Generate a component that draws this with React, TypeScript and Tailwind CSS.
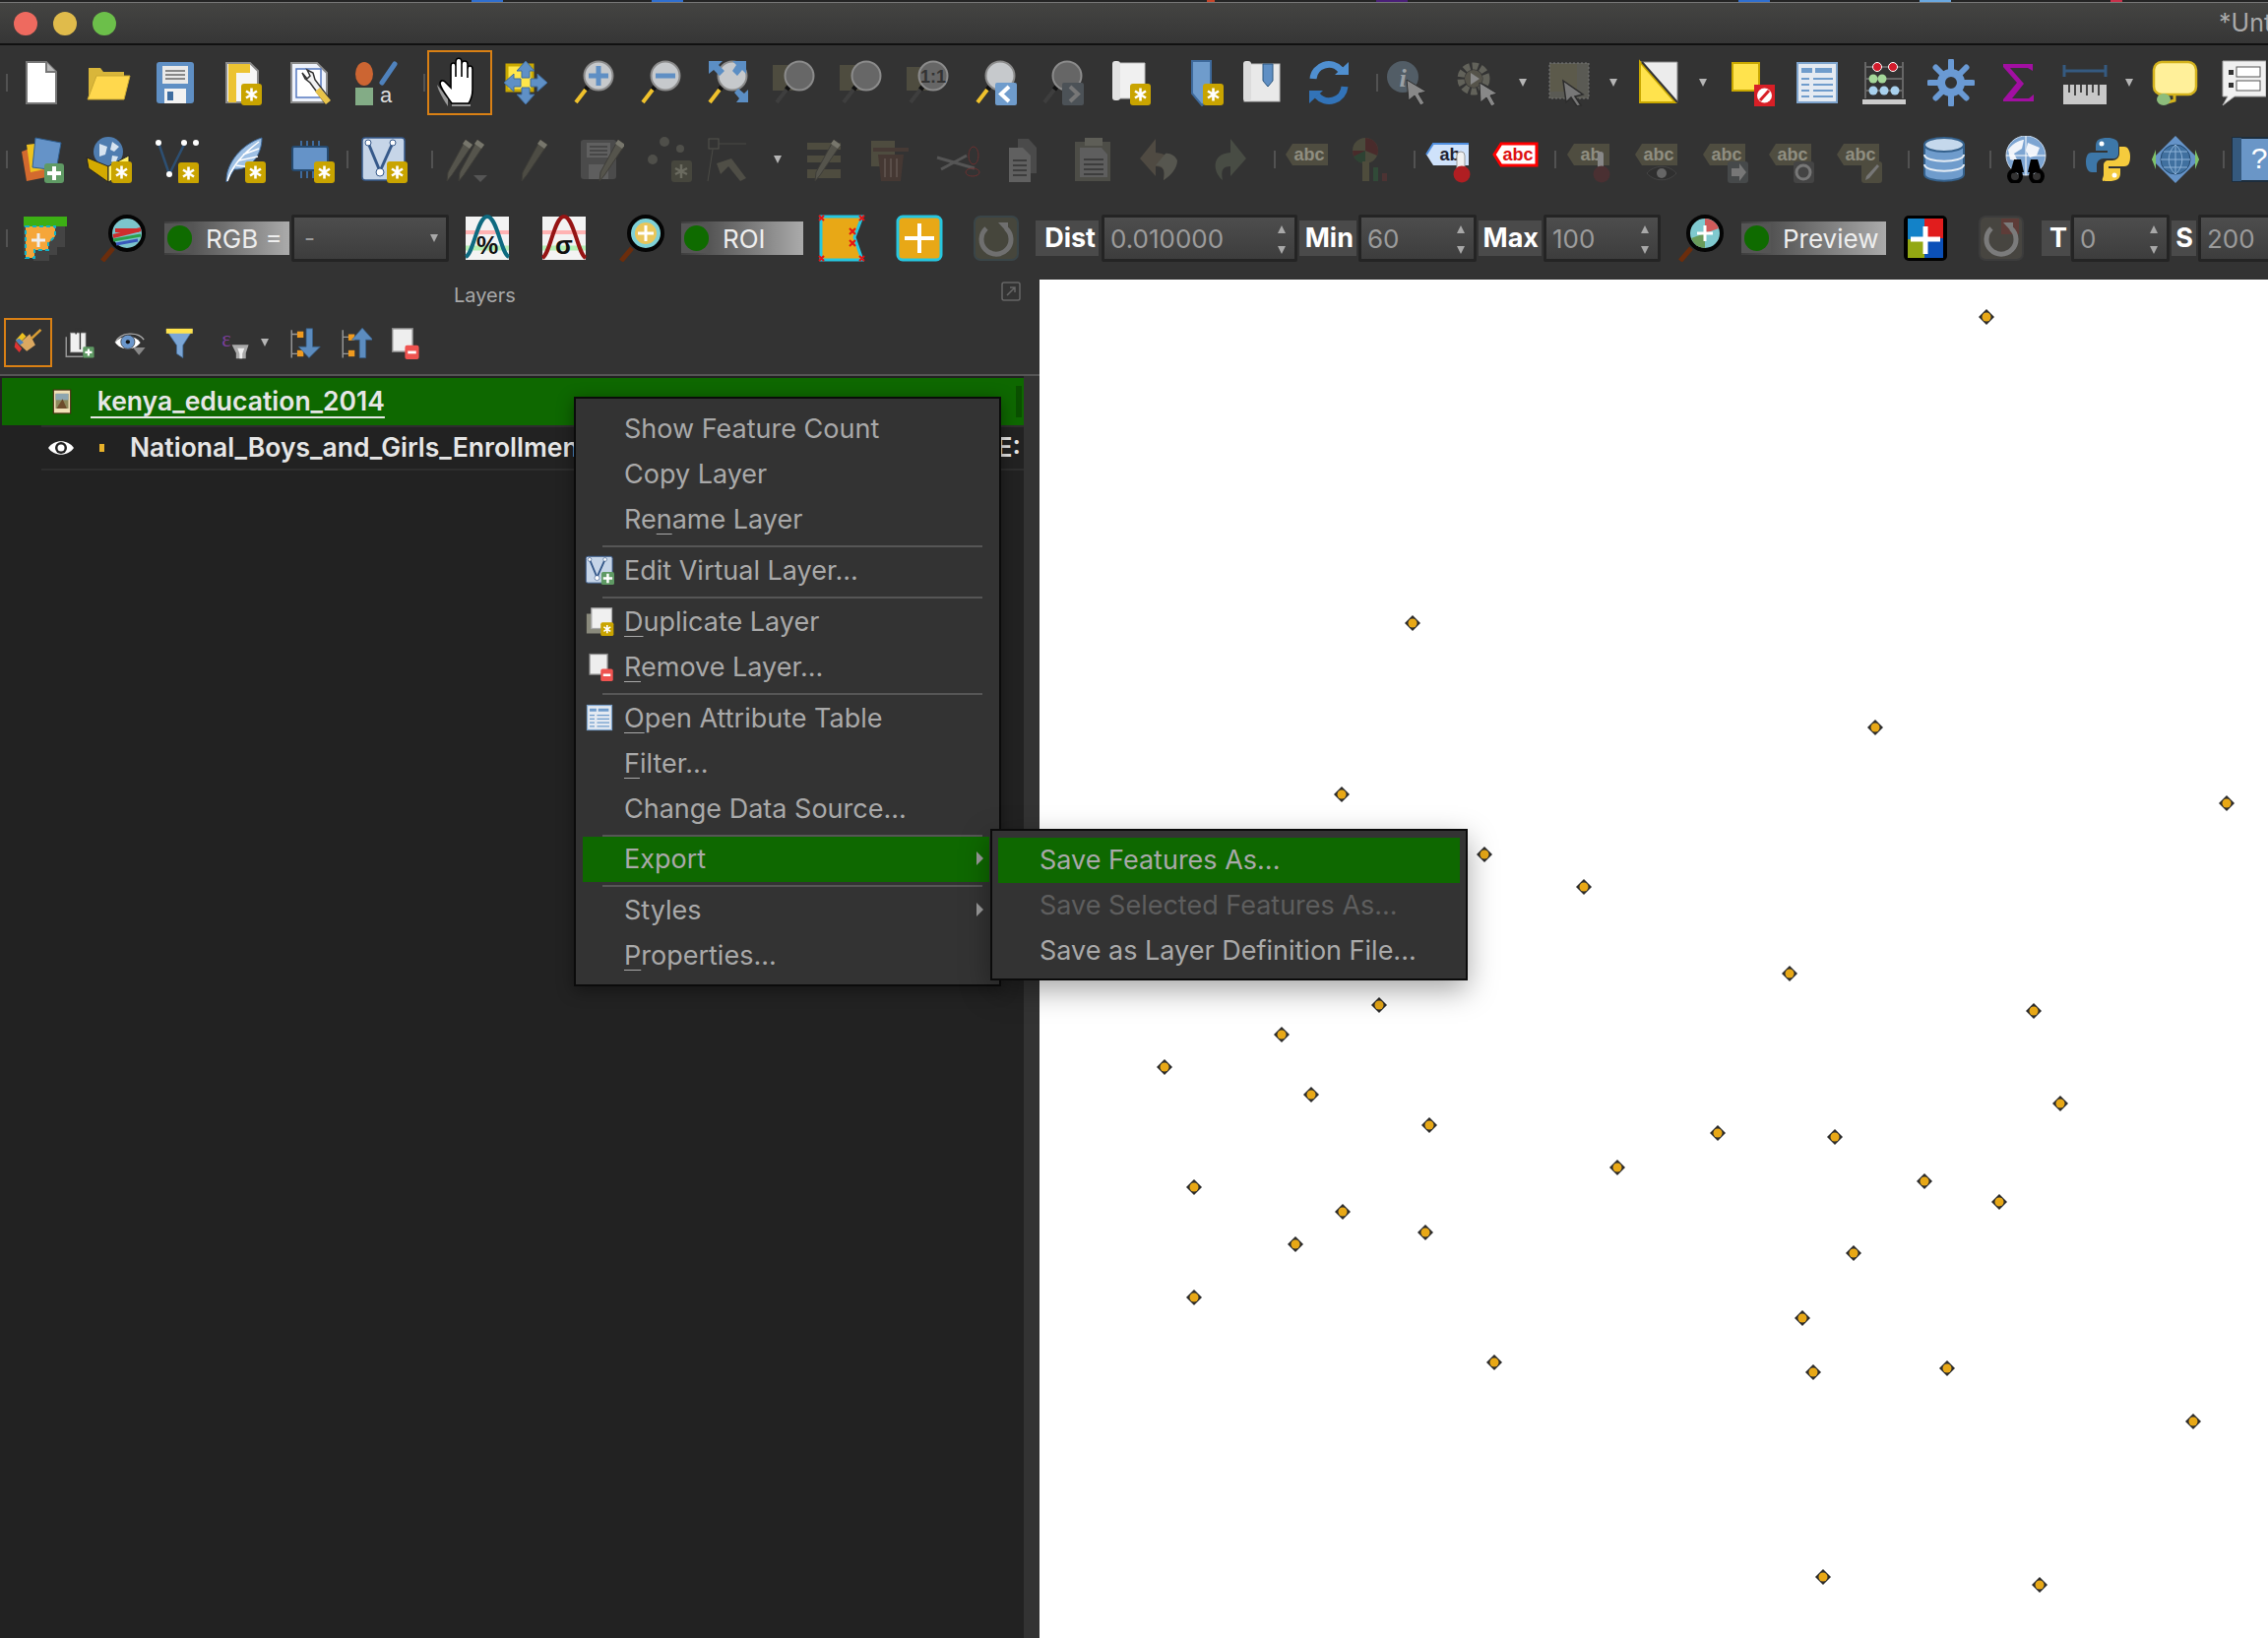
import type { ReactNode } from "react";

const Star = ({ x = 26, y = 25 }: { x?: number; y?: number }) => (
  <g>
    <rect x={x} y={y} width="21" height="22" rx="3" fill="#c9a400" />
    <path
      d={`M${x + 10.5} ${y + 4.5}v13M${x + 5} ${y + 7.5}l11 7M${x + 16} ${y + 7.5}l-11 7`}
      stroke="#fff"
      strokeWidth="2.6"
    />
  </g>
);

const Lens = ({ g = "#c6c9cc", h = "#f0c22c", children }: { g?: string; h?: string; children?: ReactNode }) => (
  <g>
    <path d="M7 44 17 31" stroke={h} strokeWidth="4" />
    <path d="M17 31l4-5" stroke="#111" strokeWidth="5" />
    <circle cx="30" cy="17" r="14.5" fill={g} stroke="#8b8b8b" strokeWidth="2" />
    {children}
  </g>
);

const DarkLens = ({ g, children }: { g: string; children?: ReactNode }) => (
  <g>
    <path d="M3 47 14 34" stroke="#6b2d0c" strokeWidth="5" />
    <circle cx="28" cy="19" r="17" fill={g} stroke="#050505" strokeWidth="4" />
    {children}
  </g>
);

const Tag = ({ fill = "#4f4d40", text = "#8f8e80", label = "abc" }: { fill?: string; text?: string; label?: string }) => (
  <g>
    <path d="M9 8h36v22H9L2 19Z" fill={fill} />
    <text x="26" y="25" textAnchor="middle" fontSize="18" fontWeight="700" fill={text} fontFamily="Liberation Sans, sans-serif">
      {label}
    </text>
  </g>
);

const Pencil = ({ x = 0, c = "#55544c" }: { x?: number; c?: string }) => (
  <g transform={`translate(${x} 0)`}>
    <path d="M28 4l7 5L14 40l-5 6 1-9Z" fill={c} stroke="#3e3d38" strokeWidth="1" />
    <path d="M28 4l7 5-3 4-7-5Z" fill="#77766c" />
  </g>
);

const Page = ({ f = "#fff" }: { f?: string }) => <path d="M9 3h20l10 10v32H9Z" fill={f} stroke="#777" strokeWidth="2" />;

const icons: Record<string, ReactNode> = {
  new: (
    <g>
      <Page />
      <path d="M29 3v10h10" fill="#bbb" stroke="#777" strokeWidth="2" />
    </g>
  ),
  open: (
    <g>
      <path d="M4 40V9h12l3 4h21v6H12L4 40Z" fill="#d9b63a" />
      <path d="M12 17h34l-6 24H3Z" fill="#ffd84d" stroke="#c9a832" />
    </g>
  ),
  save: (
    <g>
      <rect x="5" y="3" width="38" height="42" rx="3" fill="#5f8fc4" />
      <rect x="11" y="7" width="26" height="18" fill="#e9e9e9" />
      <path d="M14 12h20M14 16h20M14 20h20" stroke="#888" strokeWidth="2" />
      <rect x="13" y="30" width="22" height="15" fill="#f2f2f2" />
      <rect x="16" y="33" width="6" height="9" fill="#3e6da0" />
    </g>
  ),
  props: (
    <g>
      <path d="M8 4h24l8 8v32H8Z" fill="#f6f6f6" stroke="#8a8a8a" strokeWidth="2" />
      <path d="M10 5h22v9H18v30h-8Z" fill="#ecc332" />
      <Star x={23} y={25} />
    </g>
  ),
  wrench: (
    <g>
      <path d="M6 4h26l10 10v30H6Z" fill="#eef2fb" stroke="#8a8a8a" strokeWidth="2" />
      <rect x="11" y="10" width="25" height="29" fill="#fff" stroke="#5679c0" strokeWidth="1.5" />
      <path d="M17 14l3 6 5 4 16 22 5-4-16-21-2-7-6-3 3 6-3 3Z" fill="#f2f2f2" stroke="#333" strokeWidth="1.5" />
      <path d="M30 33l11 13 5-4-11-13Z" fill="#e8c34a" />
    </g>
  ),
  style: (
    <g>
      <ellipse cx="12" cy="15" rx="9" ry="12" fill="#cc6532" />
      <path d="M30 24 43 5" stroke="#4f82bd" strokeWidth="5" strokeLinecap="round" />
      <rect x="3" y="29" width="18" height="18" fill="#83ac86" />
      <text x="34" y="44" textAnchor="middle" fontSize="22" fill="#ddd" fontFamily="Liberation Sans, sans-serif">
        a
      </text>
    </g>
  ),
  pan: (
    <g>
      <rect x="5" y="6" width="26" height="26" fill="#ffe64a" stroke="#c9a800" strokeWidth="3" />
      <path
        d="M24 2l9 10h-5v7h-8v-7h-5ZM24 46l9-10h-5v-7h-8v7h-5ZM2 24l10-9v5h7v8h-7v5ZM46 24l-10-9v5h-7v8h7v5Z"
        fill="#5f90c6"
        stroke="#3e6a9c"
        strokeWidth="1"
      />
    </g>
  ),
  zin: (
    <Lens>
      <path d="M30 7v20M20 17h20" stroke="#5f8fc4" strokeWidth="5" />
    </Lens>
  ),
  zout: (
    <Lens>
      <path d="M20 17h20" stroke="#5f8fc4" strokeWidth="5" />
    </Lens>
  ),
  zfull: (
    <g>
      <Lens />
      <path d="M6 2h14l-4 4 6 6-5 5-6-6-5 4ZM44 2H30l4 4-4 6 5 5 5-6 4 4ZM46 44H34l3-4-5-6 4-4 6 5 4-4Z" fill="#5b8ec4" />
    </g>
  ),
  dz1: (
    <g>
      <rect x="3" y="6" width="26" height="26" fill="#4e4c3f" />
      <Lens g="#676767" h="#3e3e3e" />
    </g>
  ),
  dz11: (
    <g>
      <rect x="3" y="8" width="22" height="24" fill="#4e4c3f" />
      <Lens g="#666" h="#3e3e3e">
        <text x="30" y="24" textAnchor="middle" fontSize="18" fontWeight="700" fill="#333" fontFamily="Liberation Sans, sans-serif">
          1:1
        </text>
      </Lens>
    </g>
  ),
  zback: (
    <g>
      <Lens />
      <rect x="25" y="24" width="22" height="23" rx="2" fill="#6f9ccc" />
      <path d="M39 28l-8 7.5 8 7.5" fill="none" stroke="#fff" strokeWidth="4" />
    </g>
  ),
  zfwd: (
    <g>
      <Lens g="#666" h="#3e3e3e" />
      <rect x="25" y="24" width="22" height="23" rx="2" fill="#4c5257" />
      <path d="M33 28l8 7.5-8 7.5" fill="none" stroke="#777" strokeWidth="4" />
    </g>
  ),
  mapnew: (
    <g>
      <path d="M13 4h26v36H8V9a5 5 0 0 1 5-5Z" fill="#f0f0f0" stroke="#bbb" />
      <rect x="6" y="2" width="8" height="40" rx="3" fill="#e2e2e2" />
      <Star x={24} y={25} />
    </g>
  ),
  mark: (
    <g>
      <path d="M14 2h19v36l-9 9-10-12Z" fill="#6f9ccc" stroke="#3e6a9c" strokeWidth="2" />
      <Star x={25} y={25} />
    </g>
  ),
  marks: (
    <g>
      <rect x="6" y="5" width="36" height="38" fill="#e9e9e9" stroke="#bbb" />
      <rect x="5" y="2" width="8" height="41" rx="3" fill="#dcdcdc" />
      <path d="M25 5h10v17l-5 6-5-6Z" fill="#5f8fc4" stroke="#2d577f" />
    </g>
  ),
  refresh: (
    <g fill="none">
      <path d="M8 20a16 16 0 0 1 28-9" stroke="#4f8fd0" strokeWidth="7" />
      <path d="M30 16h14V3Z" fill="#4f8fd0" />
      <path d="M40 28a16 16 0 0 1-28 9" stroke="#3273b8" strokeWidth="7" />
      <path d="M18 32H4v13Z" fill="#3273b8" />
    </g>
  ),
  identify: (
    <g>
      <circle cx="20" cy="18" r="16" fill="#525d66" />
      <text x="20" y="28" textAnchor="middle" fontSize="26" fontStyle="italic" fontWeight="700" fill="#9aa0a5" fontFamily="Liberation Serif, serif">
        i
      </text>
      <path d="M24 21l20 12-8 2 6 10-4 2-6-10-6 5Z" fill="#888" stroke="#2c2c2c" />
    </g>
  ),
  action: (
    <g>
      <circle cx="20" cy="20" r="13" fill="none" stroke="#62625a" strokeWidth="7" strokeDasharray="6 2.5" />
      <circle cx="20" cy="20" r="9" fill="#55534a" />
      <path d="M17 14l9 6-9 6Z" fill="#888" />
      <path d="M26 24l18 11-7 2 5 9-4 2-5-9-6 5Z" fill="#888" stroke="#2c2c2c" />
    </g>
  ),
  select: (
    <g>
      <rect x="3" y="4" width="40" height="36" fill="#5a5a54" stroke="#777" strokeDasharray="2 2" />
      <rect x="4" y="5" width="27" height="28" fill="#5c5a4b" />
      <path d="M17 22l20 14-8 2 6 9-4 1-6-9-5 5Z" fill="#777" stroke="#2c2c2c" strokeWidth="1.5" />
    </g>
  ),
  invert: (
    <g>
      <path d="M5 3h38v41H5Z" fill="#ececec" stroke="#888" />
      <path d="M5 3v41h36Z" fill="#ffe34d" stroke="#c9a800" strokeWidth="2" />
      <path d="M7 3l36 41" stroke="#333" strokeWidth="2" />
    </g>
  ),
  desel: (
    <g>
      <rect x="5" y="4" width="27" height="28" fill="#ffe34d" stroke="#c9a800" strokeWidth="2" />
      <rect x="27" y="26" width="21" height="22" fill="#d81f26" />
      <circle cx="37.5" cy="37" r="7.5" fill="#fff" />
      <path d="M33 42l9-10" stroke="#d81f26" strokeWidth="3" />
    </g>
  ),
  table: (
    <g>
      <rect x="4" y="4" width="40" height="40" fill="#e4eaf2" stroke="#7ea4cd" strokeWidth="2" />
      <path d="M8 9h11v5H8ZM22 9h17v5H22Z" fill="#6f9ccc" />
      <path d="M8 20h8M20 20h20M8 26h8M20 26h20M8 32h8M20 32h20M8 38h8M20 38h20" stroke="#6f9ccc" strokeWidth="2" />
    </g>
  ),
  abacus: (
    <g>
      <path d="M5 40V3M43 40V3M5 8h38M5 20h38M5 32h38" stroke="#666" strokeWidth="2" />
      <rect x="2" y="41" width="44" height="5" fill="#ccc" />
      <circle cx="17" cy="8" r="4.5" fill="#d41c2c" stroke="#fff" />
      <circle cx="33" cy="8" r="4.5" fill="#d41c2c" stroke="#fff" />
      <circle cx="13" cy="20" r="4.5" fill="#a5d89a" />
      <circle cx="22" cy="20" r="4.5" fill="#a5d89a" />
      <circle cx="13" cy="32" r="4.5" fill="#a9d2ee" />
      <circle cx="24" cy="32" r="4.5" fill="#a9d2ee" />
      <circle cx="35" cy="32" r="4.5" fill="#a9d2ee" />
    </g>
  ),
  gear: (
    <g>
      <circle cx="24" cy="24" r="10" fill="none" stroke="#6a9ad4" strokeWidth="8" />
      <path
        d="M24 2v9M24 37v9M2 24h9M37 24h9M8.500 8.500l6 6M33.500 33.500l6 6M39.500 8.500l-6 6M14.500 33.500l-6 6"
        stroke="#6a9ad4"
        strokeWidth="6"
        strokeLinecap="round"
      />
    </g>
  ),
  sigma: <path d="M39 12V5H9v3l14 16L9 41v2h31v-7L35 40H18l12-15L16 9h18Z" fill="#a20fa2" />,
  ruler: (
    <g>
      <path d="M3 6v12M45 6v12M3 12h42" stroke="#355a80" strokeWidth="3" />
      <rect x="2" y="26" width="44" height="20" fill="#c8c8c8" />
      <path d="M8 26v8M14 26v11M20 26v8M26 26v11M32 26v8M38 26v11" stroke="#444" strokeWidth="2" />
    </g>
  ),
  tip: (
    <g>
      <rect x="2" y="3" width="43" height="33" rx="8" fill="#fff09a" stroke="#d3b21d" strokeWidth="2.5" />
      <path d="M23 36v6l-7 2" fill="none" stroke="#d3b21d" strokeWidth="3" />
      <ellipse cx="12" cy="41" rx="7" ry="6" fill="#8dbd7c" />
    </g>
  ),
  notes: (
    <g>
      <path d="M4 2h44v36H16L4 47l5-9H4Z" fill="#f0f0f0" stroke="#aaa" />
      <path d="M10 11h5v5h-5ZM10 24h5v5h-5Z" fill="#333" />
      <rect x="18" y="8" width="24" height="10" fill="#fff" stroke="#555" />
      <rect x="18" y="22" width="24" height="10" fill="#fff" stroke="#555" />
    </g>
  ),
  layers: (
    <g>
      <path d="M4 16 28 7l6 34-25 5Z" fill="#d36a2e" />
      <path d="M9 9l25-3 3 26-24 5Z" fill="#eec21f" />
      <path d="M18 2l26 5-5 28-24-3Z" fill="#6593c8" stroke="#2f5e8f" />
      <rect x="27" y="28" width="20" height="20" rx="3" fill="#5f9a64" />
      <path d="M37 31v14M30 38h14" stroke="#fff" strokeWidth="4" />
    </g>
  ),
  gpkg: (
    <g>
      <circle cx="24" cy="16" r="15" fill="#4f7db0" />
      <path d="M15 8l8 3-2 8-6 2ZM28 6l7 5-5 5-4-2ZM28 20l6 1-3 7-4-2Z" fill="#d7e4f0" />
      <path d="M2 22l22 9v16L4 33Z" fill="#d4aa00" stroke="#222" />
      <path d="M24 31l21-11v16L24 47Z" fill="#ffef6a" stroke="#222" />
      <Star x={27} y={26} />
    </g>
  ),
  nvector: (
    <g>
      <path d="M7 7l11 32M34 7l-16 32" stroke="#2d4f72" strokeWidth="2.5" />
      <circle cx="7" cy="7" r="3" fill="#fff" />
      <circle cx="33" cy="7" r="3" fill="#fff" />
      <circle cx="18" cy="39" r="3" fill="#fff" />
      <circle cx="45" cy="7" r="3" fill="#fff" />
      <Star x={27} y={27} />
    </g>
  ),
  quill: (
    <g>
      <path d="M8 47C7 28 24 8 44 2c0 18-12 33-28 32Z" fill="#9ec0e4" stroke="#3e6a9c" />
      <path d="M9 46c4-14 16-28 32-40M18 30l16 2M21 25l19-4M25 19l16-6" stroke="#fff" strokeWidth="1.5" fill="none" />
      <Star x={27} y={26} />
    </g>
  ),
  raster: (
    <g>
      <path d="M14 5v9M20 5v9M26 5v9M32 5v9M14 34v9M20 34v9M26 34v9M32 34v9" stroke="#3e6a9c" strokeWidth="2" />
      <rect x="5" y="11" width="36" height="24" rx="2" fill="#6593c8" stroke="#254a70" strokeWidth="2" />
      <Star x={27} y={26} />
    </g>
  ),
  virtual: (
    <g>
      <rect x="2" y="2" width="43" height="43" rx="3" fill="#c6d5e8" stroke="#36598a" strokeWidth="1.5" />
      <path d="M8 7l12 29 13-29" fill="none" stroke="#36598a" strokeWidth="3" />
      <circle cx="8" cy="7" r="3" fill="#fff" stroke="#36598a" />
      <circle cx="33" cy="7" r="3" fill="#fff" stroke="#36598a" />
      <circle cx="20" cy="37" r="4" fill="#fff" stroke="#36598a" />
      <Star x={27} y={26} />
    </g>
  ),
  virtualAdd: (
    <g>
      <rect x="2" y="2" width="43" height="43" rx="3" fill="#c6d5e8" stroke="#36598a" strokeWidth="1.5" />
      <path d="M8 7l12 29 13-29" fill="none" stroke="#36598a" strokeWidth="3" />
      <circle cx="8" cy="7" r="3" fill="#fff" stroke="#36598a" />
      <circle cx="33" cy="7" r="3" fill="#fff" stroke="#36598a" />
      <circle cx="20" cy="37" r="4" fill="#fff" stroke="#36598a" />
      <rect x="27" y="27" width="21" height="21" rx="3" fill="#5f9a64" />
      <path d="M37.500 30v15M30 37.500h15" stroke="#fff" strokeWidth="4" />
    </g>
  ),
  dpencils: (
    <g>
      <Pencil x={-6} />
      <Pencil x={6} />
      <path d="M30 40h14l-7 7Z" fill="#555" />
    </g>
  ),
  dpencil: <Pencil x={4} c="#4d4c44" />,
  dsave: (
    <g>
      <rect x="4" y="4" width="36" height="40" rx="3" fill="#4b4b4b" />
      <rect x="10" y="7" width="24" height="15" fill="#606060" />
      <path d="M13 11h18M13 15h18M13 19h18" stroke="#474747" strokeWidth="2" />
      <rect x="12" y="29" width="20" height="15" fill="#5e5e5e" />
      <Pencil x={14} />
    </g>
  ),
  dpoints: (
    <g fill="#4f4f4a">
      <circle cx="8" cy="24" r="5" />
      <circle cx="20" cy="6" r="5" />
      <circle cx="36" cy="13" r="4" />
      <rect x="27" y="25" width="21" height="22" rx="3" fill="#46463d" />
      <path d="M37 29v14M31 33l12 6M43 33l-12 6" stroke="#6b6b60" strokeWidth="2.5" />
    </g>
  ),
  dmove: (
    <g>
      <rect x="4" y="3" width="10" height="10" fill="none" stroke="#55554e" />
      <path d="M14 8h28M8 14 3 46" stroke="#4b4b46" />
      <path d="M12 28l15-5 15 20-6 3-12-15-8 8Z" fill="#4f4e46" />
    </g>
  ),
  arrowsel: (
    <g>
      <path d="M6 20h34v7H6ZM6 7h34v7H6ZM6 34h34v9H6Z" fill="#4e4c3f" />
      <Pencil x={5} />
    </g>
  ),
  trash: (
    <g>
      <rect x="4" y="5" width="24" height="26" fill="#4e4c3f" />
      <path d="M6 14h36" stroke="#463a35" strokeWidth="4" />
      <path d="M11 19h26l-3 27H14Z" fill="#453833" />
      <path d="M18 23v19M24 23v19M30 23v19" stroke="#5a4e49" strokeWidth="2" />
    </g>
  ),
  scissors: (
    <g fill="none">
      <path d="M2 22l38 11M6 34l26-14" stroke="#555" strokeWidth="3" />
      <ellipse cx="39" cy="20" rx="5" ry="9" stroke="#6b3030" />
      <ellipse cx="38" cy="37" rx="7" ry="4" stroke="#6b3030" />
    </g>
  ),
  copy: (
    <g>
      <path d="M17 3h11l8 9v26H17Z" fill="#4a4a4a" />
      <path d="M8 12h14l8 8v27H8Z" fill="#606060" />
      <path d="M12 25h14M12 30h14M12 35h14M12 40h14" stroke="#3d3d3d" strokeWidth="2" />
    </g>
  ),
  paste: (
    <g>
      <rect x="6" y="6" width="36" height="40" fill="#4d4d47" />
      <rect x="16" y="2" width="18" height="8" fill="#5e5e57" />
      <path d="M11 12h22l6 7v23H11Z" fill="#5e5e5e" />
      <path d="M15 24h20M15 29h20M15 34h20M15 39h20" stroke="#3d3d3d" strokeWidth="2" />
    </g>
  ),
  undo: (
    <g>
      <path d="M20 3 4 23l16 18V31c8 0 10 4 8 14 10-8 12-27-8-28Z" fill="#4f4a42" />
      <path d="M20 30c8 0 10 5 8 15 7-4 14-12 14-20-2-5-8-8-12-7Z" fill="#56564f" />
    </g>
  ),
  redo: (
    <g>
      <path d="M28 3l16 20-16 18V31c-8 0-10 4-8 14-10-8-12-27 8-28Z" fill="#484c44" />
    </g>
  ),
  dtag: <Tag />,
  dchart: (
    <g opacity="0.8">
      <circle cx="16" cy="15" r="13" fill="#52503f" />
      <path d="M16 15V2A13 13 0 0 1 28 20ZM16 15 5 22a13 13 0 0 1-2-7Z" fill="#4f2a2a" />
      <path d="M4 21a13 13 0 0 0 12 7V15Z" fill="#2d4634" />
      <rect x="13" y="26" width="7" height="20" fill="#55533f" />
      <rect x="24" y="32" width="5" height="14" fill="#31503a" />
      <rect x="33" y="38" width="5" height="8" fill="#533434" />
    </g>
  ),
  pin: (
    <g>
      <Tag fill="#cfe2fb" text="#223" label="ab" />
      <path d="M2 19 9 8h36" fill="none" stroke="#4f8fe0" strokeWidth="2" />
      <rect x="33" y="16" width="8" height="22" rx="4" fill="#f0f0f0" stroke="#999" />
      <circle cx="38" cy="39" r="8.500" fill="#b01e22" />
    </g>
  ),
  showpin: (
    <g>
      <path d="M9 8h36v22H9L2 19Z" fill="#fff" stroke="#f00" strokeWidth="3" />
      <text x="26" y="25" textAnchor="middle" fontSize="18" fontWeight="700" fill="#d11" fontFamily="Liberation Sans, sans-serif">
        abc
      </text>
    </g>
  ),
  dpin: (
    <g>
      <Tag label="ab" />
      <rect x="33" y="16" width="6" height="18" rx="3" fill="#888" />
      <circle cx="37" cy="39" r="8.500" fill="#4a3032" />
    </g>
  ),
  dshow: (
    <g>
      <Tag />
      <path d="M14 38c8-9 22-9 30 0-8 9-22 9-30 0Z" fill="#2f2f2f" stroke="#444" />
      <circle cx="29" cy="38" r="5" fill="#666" />
    </g>
  ),
  dmovel: (
    <g>
      <Tag />
      <rect x="27" y="26" width="21" height="22" rx="3" fill="#46494a" />
      <path d="M31 33h8v-5l7 9-7 9v-5h-8Z" fill="#777" />
    </g>
  ),
  drot: (
    <g>
      <Tag />
      <rect x="27" y="26" width="21" height="22" rx="3" fill="#444" />
      <circle cx="37" cy="37" r="7" fill="none" stroke="#777" strokeWidth="3" />
    </g>
  ),
  dedit: (
    <g>
      <Tag />
      <rect x="27" y="26" width="21" height="22" rx="3" fill="#4e4c3f" />
      <path d="M43 29l2 2-10 12-4 2 1-4Z" fill="#777" />
    </g>
  ),
  db: (
    <g>
      <path d="M4 9v30c0 9 40 9 40 0V9Z" fill="#6f9ccc" stroke="#35618c" strokeWidth="2" />
      <path d="M4 19c0 9 40 9 40 0M4 29c0 9 40 9 40 0" fill="none" stroke="#e4ecf4" strokeWidth="2" />
      <ellipse cx="24" cy="9" rx="20" ry="7" fill="#c5d8ec" stroke="#35618c" strokeWidth="2" />
    </g>
  ),
  globe: (
    <g>
      <circle cx="24" cy="20" r="20" fill="#7da5d2" stroke="#c8d8ea" />
      <path d="M6 14c6-8 14-10 16-10l-2 9-8 5 4 8-8-2ZM26 7l12 5-3 8-7 2-4-7Z" fill="#f0f4fa" />
      <path d="M4 20h40M24 0v40" stroke="#fff" strokeWidth="1" />
      <circle cx="13" cy="41" r="6" fill="none" stroke="#000" strokeWidth="4" />
      <circle cx="35" cy="41" r="6" fill="none" stroke="#000" strokeWidth="4" />
      <path d="M8 38l4-14h7l3 13ZM40 38l-4-14h-7l-3 13Z" fill="#000" />
    </g>
  ),
  python: (
    <g>
      <path d="M23 2c-8 0-12 2-12 8v5h12v2H7c-5 0-6 5-6 10s2 10 6 10h5v-7c0-4 3-7 7-7h10c3 0 5-2 5-5V9c0-5-5-7-11-7Z" fill="#3d77a8" />
      <path d="M24 46c8 0 12-2 12-8v-5H24v-2h16c5 0 6-5 6-10s-2-10-6-10h-5v7c0 4-3 7-7 7H24c-3 0-5 2-5 5v9c0 5-5 7 5 7Z" fill="#f5cb3d" />
      <circle cx="17" cy="8" r="2.500" fill="#fff" />
      <circle cx="30" cy="40" r="2.500" fill="#fff" />
    </g>
  ),
  wms: (
    <g>
      <path d="M24 0l24 24-24 24L0 24Z" fill="#6593c8" />
      <path d="M4 14l-4 10 4 10ZM44 14l4 10-4 10Z" fill="#7fc26a" />
      <circle cx="24" cy="24" r="15" fill="#40709f" stroke="#23496e" />
      <path d="M9 24h30M24 9v30M12 16h24M12 32h24M24 9c-9 8-9 22 0 30M24 9c9 8 9 22 0 30" stroke="#8db2d8" fill="none" />
    </g>
  ),
  help: (
    <g>
      <rect x="4" y="2" width="44" height="44" fill="#6a96c7" stroke="#1d2d3c" strokeWidth="2" />
      <rect x="4" y="2" width="9" height="44" fill="#35597d" />
      <text x="31" y="33" textAnchor="middle" fontSize="30" fill="#fff" fontFamily="Liberation Sans, sans-serif">
        ?
      </text>
    </g>
  ),
  roiNew: (
    <g>
      <path d="M2 3h42v30h-8v8h-8v6H12v-6H2Z" fill="#444" />
      <path d="M2 2h44v10H2Z" fill="#3caf14" />
      <path d="M4 12h30v10l-7 7v7H13v8H4Z" fill="#f5a63a" stroke="#11b2c8" strokeWidth="2" strokeDasharray="4 3" />
      <path d="M17 19v14M10 26h14" stroke="#eee" strokeWidth="3" />
    </g>
  ),
  scpZoom: (
    <DarkLens g="#7cc5cc">
      <path d="M14 22l28-7M16 16l24 0" stroke="#cf2d2d" strokeWidth="4" />
      <path d="M14 26l28-5" stroke="#2ca04a" strokeWidth="3" />
      <path d="M17 30l22-4" stroke="#3858bb" strokeWidth="3" />
    </DarkLens>
  ),
  gauss: (
    <g>
      <rect x="2" y="2" width="44" height="44" fill="#f3f3f3" />
      <path d="M2 18h44" stroke="#ffb3b3" strokeWidth="4" />
      <path d="M2 34h44" stroke="#b5f0b5" strokeWidth="5" />
      <path d="M2 43C10 40 14 2 24 2s14 38 22 41" fill="none" stroke="#0e6a80" strokeWidth="4" />
      <text x="24" y="40" textAnchor="middle" fontSize="25" fontWeight="700" fill="#111" fontFamily="Liberation Sans, sans-serif">
        %
      </text>
    </g>
  ),
  sigmaG: (
    <g>
      <rect x="2" y="2" width="44" height="44" fill="#f3f3f3" />
      <path d="M2 18h44" stroke="#ffb3b3" strokeWidth="4" />
      <path d="M2 34h44" stroke="#b5f0b5" strokeWidth="5" />
      <path d="M2 44C10 40 14 2 24 2s14 38 22 42" fill="none" stroke="#961414" strokeWidth="4" />
      <text x="24" y="40" textAnchor="middle" fontSize="26" fontWeight="700" fill="#111" fontFamily="Liberation Sans, sans-serif">
        σ
      </text>
    </g>
  ),
  plusLens: (
    <DarkLens g="#7fd1d6">
      <circle cx="28" cy="19" r="11" fill="#e9c65b" />
      <path d="M28 11v16M20 19h16" stroke="#fff" strokeWidth="3" />
    </DarkLens>
  ),
  polyRoi: (
    <g>
      <path d="M3 2h42l-8 21 8 23H3Z" fill="#e8a816" stroke="#26c6e0" strokeWidth="3" />
      <path d="M1 1l5 5M6 1 1 6M42 1l5 5M47 1l-5 5M1 42l5 5M6 42l-5 5M42 42l5 5M47 42l-5 5M32 14l6 6M38 14l-6 6M32 26l6 6M38 26l-6 6" stroke="#e41313" strokeWidth="2" />
    </g>
  ),
  plusRoi: (
    <g>
      <rect x="2" y="2" width="44" height="44" rx="5" fill="#e8a816" stroke="#26c6e0" strokeWidth="3" />
      <path d="M24 9v30M9 24h30" stroke="#fff" strokeWidth="4" />
    </g>
  ),
  undoRoi: (
    <g>
      <rect x="2" y="2" width="44" height="44" rx="6" fill="#46463c" stroke="#3a4548" strokeWidth="2" />
      <path d="M14 14a15 15 0 1 0 20 0" fill="none" stroke="#6f6f6f" strokeWidth="5" />
      <path d="M26 8h10v11Z" fill="#6f6f6f" />
    </g>
  ),
  colorLens: (
    <DarkLens g="#7fc9cf">
      <path d="M28 4a15 15 0 0 1 14 10l-14 5Z" fill="#cf5a5a" />
      <path d="M14 24l14-5v15a15 15 0 0 1-14-10Z" fill="#6a9c5a" />
      <path d="M28 11v16M20 19h16" stroke="#fff" strokeWidth="3" />
    </DarkLens>
  ),
  colorPlus: (
    <g>
      <rect x="2" y="1" width="44" height="46" rx="5" fill="#000" />
      <path d="M6 4h17v21H6Z" fill="#1382c8" />
      <path d="M23 4h19v20H23Z" fill="#e11d1d" />
      <path d="M6 25h17v19H6Z" fill="#93a812" />
      <path d="M23 24h19v20H23Z" fill="#0b50b8" />
      <path d="M24 12v28M9 25h30" stroke="#fff" strokeWidth="5" />
    </g>
  ),
  undoColor: (
    <g>
      <rect x="2" y="2" width="44" height="44" rx="6" fill="#474540" stroke="#3c3c3c" strokeWidth="2" />
      <path d="M24 4h18v16H24Z" fill="#5e3c38" />
      <path d="M14 14a15 15 0 1 0 20 0" fill="none" stroke="#7b7b7b" strokeWidth="5" />
      <path d="M26 8h10v11Z" fill="#7b7b7b" />
    </g>
  ),
  brush: (
    <g>
      <path d="M8 26 26 10l9 18-14 10Z" fill="#dca860" />
      <path d="M8 26 20 14 14 8 3 20Z" fill="#eec21f" />
      <path d="M3 22l10 12-4 6-8-9Z" fill="#d33" />
      <path d="M3 20l7 8 6-4-7-7Z" fill="#4f82bd" />
      <path d="M28 18 44 3" stroke="#d79c34" strokeWidth="4" />
    </g>
  ),
  addgroup: (
    <g>
      <path d="M6 16v28h24" fill="none" stroke="#999" strokeWidth="2" />
      <rect x="12" y="10" width="22" height="28" fill="#f0f0f0" stroke="#888" />
      <path d="M20 12V4h6v30" fill="none" stroke="#333" strokeWidth="2" />
      <rect x="30" y="30" width="16" height="16" rx="2" fill="#5f9a64" />
      <path d="M38 33v10M33 38h10" stroke="#fff" strokeWidth="3" />
    </g>
  ),
  eyeBlue: (
    <g>
      <path d="M3 24C10 8 36 8 44 20" fill="none" stroke="#aaa" strokeWidth="2" />
      <path d="M3 24c8-12 28-12 36 0-8 12-28 12-36 0Z" fill="#fff" />
      <circle cx="21" cy="23" r="10" fill="#6a96cb" stroke="#333" />
      <circle cx="21" cy="23" r="3" fill="#111" />
      <path d="M28 31h18l-9 11Z" fill="#888" />
    </g>
  ),
  funnel: (
    <g>
      <path d="M4 6h38l-14 22v18l-9-6V28Z" fill="#7ba6d6" stroke="#3e6a9c" />
      <rect x="4" y="4" width="38" height="7" fill="#ffe34d" />
    </g>
  ),
  expr: (
    <g>
      <text x="14" y="30" textAnchor="middle" fontSize="32" fill="#7a3f9a" fontFamily="Liberation Serif, serif">
        ε
      </text>
      <path d="M22 27h24l-4 12v8H28v-8Z" fill="#aaa" />
      <path d="M30 32h10l-3 8v7h-4v-7Z" fill="#eee" />
    </g>
  ),
  expandAll: (
    <g>
      <path d="M6 6v40M6 12h12M6 40h12" stroke="#999" strokeWidth="2" />
      <rect x="14" y="8" width="9" height="9" fill="#ef9a1f" />
      <rect x="14" y="35" width="9" height="9" fill="#ef9a1f" />
      <path d="M27 4h9v26h11L31 46 16 30h11Z" fill="#5c8cbf" stroke="#36618c" />
    </g>
  ),
  collapseAll: (
    <g>
      <path d="M6 6v40M6 16h12M6 40h12" stroke="#999" strokeWidth="2" />
      <rect x="14" y="12" width="9" height="9" fill="#ef9a1f" />
      <rect x="14" y="35" width="9" height="9" fill="#ef9a1f" />
      <path d="M30 46h9V20h10L34 3 19 20h11Z" fill="#5c8cbf" stroke="#36618c" />
    </g>
  ),
  removeL: (
    <g>
      <rect x="8" y="4" width="29" height="33" fill="#eee" stroke="#888" strokeWidth="2" />
      <rect x="26" y="28" width="20" height="20" rx="3" fill="#ef5350" />
      <path d="M30 38h12" stroke="#fff" strokeWidth="4" />
    </g>
  ),
  duplicate: (
    <g>
      <path d="M3 12h32v32H3Z" fill="#8a8a7c" />
      <rect x="11" y="3" width="33" height="33" fill="#f0f0f0" stroke="#aaa" strokeWidth="2" />
      <Star x={26} y={26} />
    </g>
  ),
  rasterThumb: (
    <g>
      <rect x="8" y="2" width="32" height="44" fill="#f1e1b7" stroke="#4a2c12" strokeWidth="2" />
      <rect x="12" y="9" width="24" height="28" fill="#8d8a5c" />
      <path d="M12 9h24v12H12Z" fill="#8da6b0" />
      <path d="M18 30l7-11 8 18H14Z" fill="#6d4c2b" />
    </g>
  ),
};

const I = ({ n, c = "ml-[20px]" }: { n: string; c?: string }) => (
  <svg viewBox="0 0 48 48" className={`h-12 w-12 shrink-0 ${c}`}>
    {icons[n]}
  </svg>
);

const Sep = ({ c }: { c: string }) => <div className={`h-[18px] w-[2px] shrink-0 bg-[#525252] ${c}`} />;

const Drop = ({ c }: { c: string }) => (
  <div className={`flex w-3 shrink-0 justify-center ${c}`}>
    <div className="h-0 w-0 border-x-[4px] border-t-[8px] border-x-transparent border-t-[#b5b5b5]" />
  </div>
);

const Toggle = ({ label, c }: { label: string; c: string }) => (
  <div className={`flex h-[34px] shrink-0 items-center bg-gradient-to-r from-[#3e3e3e] to-[#ababab] text-[26px] text-[#eee] ${c}`}>
    <div className="flex h-[30px] w-[30px] items-center justify-center bg-[#555]">
      <div className="h-[26px] w-[25px] rounded-full bg-[#0f6b00]" />
    </div>
    <span className="ml-3">{label}</span>
  </div>
);

const Spin = ({ value, c }: { value: string; c: string }) => (
  <div className={`relative flex h-12 shrink-0 items-center rounded-[2px] border-[3px] border-[#242424] bg-gradient-to-b from-[#4d4d4d] to-[#3d3d3d] pl-[6px] text-[26px] text-[#9b9b9b] ${c}`}>
    {value}
    <div className="absolute top-2 right-[9px] flex flex-col gap-[13px]">
      <div className="h-0 w-0 border-x-[4px] border-b-[8px] border-x-transparent border-b-[#a8a8a8]" />
      <div className="h-0 w-0 border-x-[4px] border-t-[8px] border-x-transparent border-t-[#a8a8a8]" />
    </div>
  </div>
);

const Lbl = ({ t, c }: { t: string; c: string }) => (
  <div className={`flex h-9 shrink-0 items-center justify-end bg-[#4a4a4a] pr-[3px] text-[27px] font-bold text-white ${c}`}>{t}</div>
);

const MItem = ({ children, icon, arrow, active }: { children: ReactNode; icon?: string; arrow?: boolean; active?: boolean }) => (
  <div className={`relative flex h-[46px] items-center pl-[42px] text-[27px] text-[#a9a9a9] ${active ? "bg-[#0e6800]" : ""}`}>
    {icon && (
      <svg viewBox="0 0 48 48" className="absolute top-[7px] left-[2px] h-[30px] w-[30px]">
        {icons[icon]}
      </svg>
    )}
    <span>{children}</span>
    {arrow && <div className="absolute top-[15px] right-[6px] h-0 w-0 border-y-[7px] border-l-[7px] border-y-transparent border-l-[#9a9a9a]" />}
  </div>
);

const MSep = ({ c = "mt-[3px] mb-[1px]" }: { c?: string }) => <div className={`mr-[7px] ml-[20px] h-[2px] bg-[#565656] ${c}`} />;

const U = ({ children }: { children: ReactNode }) => <span className="underline decoration-1 underline-offset-[5px]">{children}</span>;

const points = [
  [1373, 219], [976, 431], [1296, 503], [927, 549], [1539, 555], [1026, 591], [1095, 613], [1237, 673], [1406, 699],
  [953, 695], [886, 715], [805, 738], [906, 757], [1424, 763], [988, 778], [1187, 783], [1268, 786], [1118, 807],
  [1330, 817], [825, 821], [1382, 831], [928, 838], [985, 852], [895, 860], [1281, 866], [825, 897], [1246, 911],
  [1033, 942], [1346, 946], [1253, 949], [1516, 983], [1260, 1090], [1410, 1096],
];

export default function App() {
  return (
    <div className="relative flex h-[1664px] w-[2304px] flex-col overflow-hidden bg-[#333333] font-['Inter',sans-serif]">
      {/* strip of the window behind */}
      <div className="flex h-[2px] shrink-0 bg-[#242424]">
        <div className="ml-[479px] w-8 bg-[#2f6fd0]" />
        <div className="ml-[151px] w-8 bg-[#2f6fd0]" />
        <div className="ml-[532px] w-2 bg-[#c8452a]" />
        <div className="ml-[164px] w-8 bg-[#4a1f78]" />
        <div className="ml-[336px] w-8 bg-[#2f6fd0]" />
        <div className="ml-[152px] w-8 bg-[#6aa8e0]" />
        <div className="ml-[162px] w-3 bg-[#c8304a]" />
      </div>

      {/* title bar */}
      <div className="flex h-[44px] shrink-0 items-center gap-4 border-t-[1px] border-b-2 border-t-[#777] border-b-[#111] bg-gradient-to-b from-[#444442] to-[#363636] pl-[14px]">
        <div className="h-6 w-6 rounded-full bg-[#ee6a5f]" />
        <div className="h-6 w-6 rounded-full bg-[#e0bb4b]" />
        <div className="h-6 w-6 rounded-full bg-[#6cbf4a]" />
        <div className="ml-auto w-[50px] overflow-hidden text-[25px] whitespace-nowrap text-[#aaa]">*Untitled</div>
      </div>

      {/* toolbar row 1 */}
      <div className="flex h-[76px] shrink-0 items-center pl-[6px]">
        <Sep c="" />
        <I n="new" c="ml-[10px]" />
        <I n="open" />
        <I n="save" />
        <I n="props" />
        <I n="wrench" />
        <I n="style" />
        <Sep c="ml-[24px]" />
        <div className="ml-[2px] flex h-[66px] w-[66px] shrink-0 items-center justify-center border-2 border-[#d98014]">
          <svg viewBox="0 0 48 52" className="h-[52px] w-12">
            <path d="M12 50 C8 44 2 34 1 28 L12 42Z" fill="#999" />
            <path
              d="M16 47C12 41 5 33 4 27c0-4 4-4 6-1l5 5V9c0-4 5-4 5 0v11V5c0-5 6-5 6 0v15V7c0-4 6-4 6 0v14V12c0-4 5-4 5 0v21c0 6-2 11-4 14Z"
              fill="#fff"
              stroke="#000"
              strokeWidth="1.600"
            />
            <path d="M16 49h19" stroke="#999" strokeWidth="2" />
          </svg>
        </div>
        <I n="pan" c="ml-[10px]" />
        <I n="zin" />
        <I n="zout" />
        <I n="zfull" />
        <I n="dz1" />
        <I n="dz1" />
        <I n="dz11" />
        <I n="zback" />
        <I n="zfwd" />
        <I n="mapnew" c="ml-[22px]" />
        <I n="mark" c="ml-[25px]" />
        <I n="marks" c="ml-[13px]" />
        <I n="refresh" />
        <Sep c="ml-[24px]" />
        <I n="identify" c="ml-[5px]" />
        <I n="action" c="ml-[24px]" />
        <Drop c="ml-[16px]" />
        <I n="select" c="ml-[18px]" />
        <Drop c="ml-[14px]" />
        <I n="invert" c="ml-[16px]" />
        <Drop c="ml-[15px]" />
        <I n="desel" c="ml-[19px]" />
        <I n="table" c="ml-[19px]" />
        <I n="abacus" />
        <I n="gear" />
        <I n="sigma" />
        <I n="ruler" />
        <Drop c="ml-[15px]" />
        <I n="tip" c="ml-[17px]" />
        <I n="notes" />
      </div>

      {/* toolbar row 2 */}
      <div className="flex h-[80px] shrink-0 items-center pl-[6px]">
        <Sep c="" />
        <I n="layers" c="ml-[10px]" />
        <I n="gpkg" />
        <I n="nvector" />
        <I n="quill" />
        <I n="raster" c="ml-[22px]" />
        <Sep c="ml-[12px]" />
        <I n="virtual" c="ml-[12px]" />
        <Sep c="ml-[24px]" />
        <I n="dpencils" c="ml-[11px]" />
        <I n="dpencil" c="ml-[18px]" />
        <I n="dsave" c="ml-[21px]" />
        <I n="dpoints" c="ml-[21px]" />
        <I n="dmove" c="ml-[13px]" />
        <Drop c="ml-[20px]" />
        <I n="arrowsel" c="ml-[18px]" />
        <I n="trash" c="ml-[19px]" />
        <I n="scissors" c="ml-[21px]" />
        <I n="copy" c="ml-[19px]" />
        <I n="paste" c="ml-[21px]" />
        <I n="undo" />
        <I n="redo" />
        <Sep c="ml-[24px]" />
        <I n="dtag" c="ml-[8px]" />
        <I n="dchart" c="ml-[19px]" />
        <Sep c="ml-[17px]" />
        <I n="pin" c="ml-[9px]" />
        <I n="showpin" c="ml-[21px]" />
        <Sep c="ml-[15px]" />
        <I n="dpin" c="ml-[9px]" />
        <I n="dshow" c="ml-[21px]" />
        <I n="dmovel" c="ml-[21px]" />
        <I n="drot" c="ml-[19px]" />
        <I n="dedit" c="ml-[21px]" />
        <Sep c="ml-[26px]" />
        <I n="db" c="ml-[11px]" />
        <Sep c="ml-[22px]" />
        <I n="globe" c="ml-[11px]" />
        <Sep c="ml-[24px]" />
        <I n="python" c="ml-[10px]" />
        <I n="wms" />
        <Sep c="ml-[24px]" />
        <I n="help" c="ml-[4px]" />
      </div>

      {/* toolbar row 3 */}
      <div className="flex h-[82px] shrink-0 items-center pb-[2px] pl-[6px]">
        <Sep c="" />
        <I n="roiNew" c="ml-[14px]" />
        <I n="scpZoom" c="ml-[31px]" />
        <Toggle label="RGB =" c="ml-[18px] w-[127px] pl-0" />
        <div className="relative ml-[2px] flex h-12 w-[160px] shrink-0 items-center rounded-[2px] border-[3px] border-[#242424] bg-gradient-to-b from-[#4d4d4d] to-[#3d3d3d] pl-[10px] text-[24px] text-[#9b9b9b]">
          -
          <div className="absolute top-[17px] right-[8px] h-0 w-0 border-x-[4px] border-t-[8px] border-x-transparent border-t-[#a8a8a8]" />
        </div>
        <I n="gauss" c="ml-[15px]" />
        <I n="sigmaG" c="ml-[30px]" />
        <I n="plusLens" c="ml-[31px]" />
        <Toggle label="ROI" c="ml-[16px] w-[124px]" />
        <I n="polyRoi" c="ml-[15px]" />
        <I n="plusRoi" c="ml-[31px]" />
        <I n="undoRoi" c="ml-[30px]" />
        <Lbl t="Dist" c="ml-[16px] w-16" />
        <Spin value="0.010000" c="ml-[3px] w-[199px]" />
        <Lbl t="Min" c="ml-[2px] w-[58px]" />
        <Spin value="60" c="ml-[2px] w-[120px]" />
        <Lbl t="Max" c="ml-[2px] w-16" />
        <Spin value="100" c="ml-[2px] w-[119px]" />
        <I n="colorLens" c="ml-[17px]" />
        <Toggle label="Preview" c="ml-[17px] w-[147px]" />
        <I n="colorPlus" c="ml-[16px]" />
        <I n="undoColor" c="ml-[29px]" />
        <Lbl t="T" c="ml-[17px] w-[29px]" />
        <Spin value="0" c="ml-[1px] w-[100px]" />
        <Lbl t="S" c="ml-[2px] w-[25px]" />
        <Spin value="200" c="ml-[2px] w-[100px]" />
      </div>

      <div className="flex min-h-0 flex-1">
        {/* layers panel */}
        <div className="flex w-[1056px] shrink-0 flex-col">
          <div className="relative flex h-[34px] shrink-0 items-center pb-[2px] pl-[461px] text-[20px] text-[#a8a8a8]">
            Layers
            <svg viewBox="0 0 20 20" className="absolute top-[2px] left-[1017px] h-5 w-5" fill="none" stroke="#666" strokeWidth="1.500">
              <rect x="1" y="1" width="18" height="18" rx="2" />
              <path d="M6 14l8-8M9 6h5v5" />
            </svg>
          </div>
          <div className="flex h-[62px] shrink-0 items-center pb-[2px] pl-1">
            <div className="flex h-[50px] w-[49px] items-center justify-center border-2 border-[#d98014]">
              <svg viewBox="0 0 48 48" className="h-[30px] w-[30px]">
                {icons.brush}
              </svg>
            </div>
            <svg viewBox="0 0 48 48" className="ml-[10px] h-[34px] w-[34px]">{icons.addgroup}</svg>
            <svg viewBox="0 0 48 48" className="ml-[18px] h-[34px] w-[34px]">{icons.eyeBlue}</svg>
            <svg viewBox="0 0 48 48" className="ml-[17px] h-[34px] w-[34px]">{icons.funnel}</svg>
            <svg viewBox="0 0 48 48" className="ml-[20px] h-[34px] w-[34px]">{icons.expr}</svg>
            <Drop c="ml-[9px]" />
            <svg viewBox="0 0 48 48" className="ml-[17px] h-[34px] w-[34px]">{icons.expandAll}</svg>
            <svg viewBox="0 0 48 48" className="ml-[18px] h-[34px] w-[34px]">{icons.collapseAll}</svg>
            <svg viewBox="0 0 48 48" className="ml-[15px] h-[34px] w-[34px]">{icons.removeL}</svg>
          </div>
          <div className="flex min-h-0 flex-1 border-t-2 border-[#555]">
            <div className="flex w-[1040px] flex-col bg-[#222222] pt-[2px]">
              <div className="ml-[2px] flex h-[48px] shrink-0 items-center justify-between bg-[#0e6800] text-[26.500px] font-semibold text-[#e6e6e6]">
                <div className="flex items-center">
                  <svg viewBox="0 0 48 48" className="ml-[48px] h-[26px] w-[26px]">{icons.rasterThumb}</svg>
                  <span className="ml-[16px] whitespace-pre underline decoration-2 underline-offset-[6px]"> kenya_education_2014</span>
                </div>
                <div className="mr-[2px] h-8 w-[6px] bg-[#0a4f00]" />
              </div>
              <div className="ml-[42px] flex h-[46px] shrink-0 items-center justify-between border-y-2 border-y-[#2e2e2e] text-[26.500px] font-semibold text-[#e6e6e6]">
                <div className="flex items-center">
                  <svg viewBox="0 0 28 20" className="ml-[6px] h-5 w-7">
                    <path d="M1 10C7 1 21 1 27 10 21 19 7 19 1 10Z" fill="#fff" />
                    <circle cx="14" cy="10" r="6" fill="#222" />
                    <circle cx="14" cy="10" r="3.500" fill="#fff" />
                  </svg>
                  <div className="ml-[25px] h-[8px] w-[5px] bg-[#e8b22a]" />
                  <span className="ml-[26px] whitespace-nowrap">National_Boys_and_Girls_Enrollment</span>
                </div>
                <span className="mr-[3px]">E:</span>
              </div>
            </div>
          </div>
        </div>

        {/* map canvas */}
        <div className="relative flex-1 bg-white">
          {points.map(([x, y]) => (
            <svg
              key={`${x}-${y}`}
              viewBox="0 0 16 16"
              className="absolute h-4 w-4"
              style={{ left: x * 1.4694 - 1056 - 7.5, top: y * 1.4694 - 284 - 8 }}
            >
              <path d="M8 0l8 8-8 8-8-8Z" fill="#2d2d2d" />
              <circle cx="8" cy="8" r="4.500" fill="#e8a816" />
            </svg>
          ))}
        </div>
      </div>

      {/* context menu */}
      <div className="absolute top-[403px] left-[583px] w-[434px] border-2 border-[#0b0b0b] bg-[#333333] pt-2 pr-[10px] pb-[6px] pl-[7px] shadow-[0_4px_16px_rgba(0,0,0,0.4)]">
        <MItem>Show Feature Count</MItem>
        <MItem>Copy Layer</MItem>
        <MItem>
          Re<U>n</U>ame Layer
        </MItem>
        <MSep />
        <MItem icon="virtualAdd">Edit Virtual Layer...</MItem>
        <MSep />
        <MItem icon="duplicate">
          <U>D</U>uplicate Layer
        </MItem>
        <MItem icon="removeL">
          <U>R</U>emove Layer...
        </MItem>
        <MSep />
        <MItem icon="table">
          <U>O</U>pen Attribute Table
        </MItem>
        <MItem>
          <U>F</U>ilter...
        </MItem>
        <MItem>Change Data Source...</MItem>
        <MSep c="mt-[3px]" />
        <MItem arrow active>
          Export
        </MItem>
        <MSep c="mt-[3px] mb-[1px]" />
        <MItem arrow>Styles</MItem>
        <MItem>
          <U>P</U>roperties...
        </MItem>
      </div>

      {/* export submenu */}
      <div className="absolute top-[842px] left-[1006px] w-[485px] border-2 border-[#0b0b0b] bg-[#333333] px-[6px] pt-[7px] pb-[5px] text-[27px] shadow-[0_10px_28px_rgba(0,0,0,0.35)]">
        <div className="flex h-[46px] items-center bg-[#0e6800] pl-[42px] text-[#a9a9a9]">Save Features As...</div>
        <div className="flex h-[46px] items-center pl-[42px] text-[#5e5e5e]">Save Selected Features As...</div>
        <div className="flex h-[46px] items-center pl-[42px] text-[#a9a9a9]">Save as Layer Definition File...</div>
      </div>
    </div>
  );
}
